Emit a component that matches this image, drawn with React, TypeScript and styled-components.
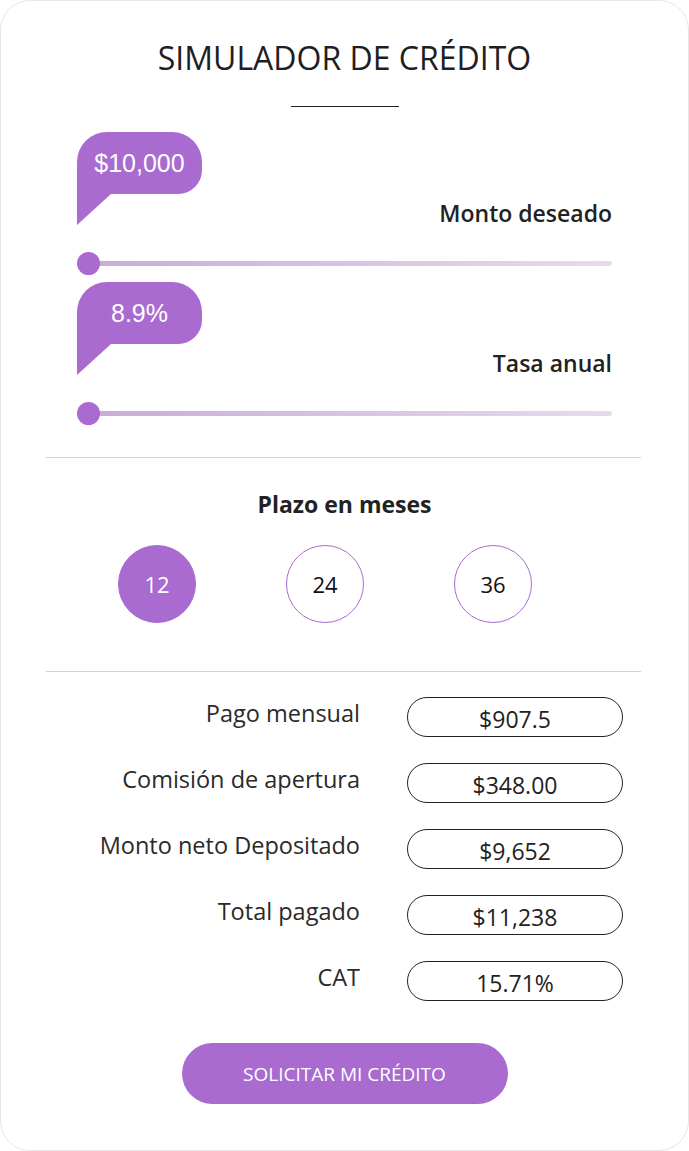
import React from "react";
import styled, { createGlobalStyle } from "styled-components";

const PURPLE = "#a96bd0";

const GlobalStyle = createGlobalStyle`
  html, body { margin: 0; padding: 0; background: #ffffff; }
  * { box-sizing: border-box; }
  body { font-family: "Open Sans", "Noto Sans", sans-serif; color: #222; }
`;

const Card = styled.div`
  width: 689px;
  height: 1151px;
  border: 1px solid #e6e6e6;
  border-radius: 30px;
  background: #fff;
  padding-top: 37px;
  display: flex;
  flex-direction: column;
`;

const Title = styled.h1`
  margin: 0;
  font-family: "Open Sans", sans-serif;
  font-weight: 500;
  font-size: 32px;
  line-height: 40px;
  text-align: center;
  color: #1e1e24;
`;

const TitleRule = styled.div`
  width: 108px;
  height: 1px;
  background: #222;
  margin: 28px auto 0;
`;

const Sliders = styled.div`
  margin: 25px 76px 0 76px;
  display: flex;
  flex-direction: column;
  gap: 7px;
`;

const SliderBlock = styled.div`
  display: flex;
  flex-direction: column;
`;

const BubbleRow = styled.div`
  height: 93px;
  display: flex;
  justify-content: space-between;
  align-items: flex-start;
`;

const Bubble = styled.div`
  position: relative;
  width: 125px;
  height: 62px;
  background: ${PURPLE};
  border-radius: 30px 30px 24px 0;
  color: #fff;
  font-family: "Liberation Sans", Arial, sans-serif;
  font-size: 25px;
  display: flex;
  align-items: center;
  justify-content: center;
  &::after {
    content: "";
    position: absolute;
    left: 0;
    top: 100%;
    width: 0;
    height: 0;
    border-top: 31px solid ${PURPLE};
    border-right: 34px solid transparent;
  }
`;

const SliderLabel = styled.div`
  align-self: flex-end;
  font-weight: 600;
  font-size: 23px;
  line-height: 24px;
  margin-bottom: 0;
  color: #222;
`;

const Track = styled.div`
  margin-top: 26px;
  height: 24px;
  display: flex;
  align-items: center;
`;

const Thumb = styled.div`
  position: relative;
  z-index: 1;
  width: 23px;
  height: 23px;
  border-radius: 50%;
  background: ${PURPLE};
  flex: none;
`;

const Rail = styled.div`
  flex: 1;
  height: 5px;
  margin-left: -12px;
  border-radius: 3px;
  background: linear-gradient(90deg, #c8acd8 0%, #e6dbee 100%);
`;

const Divider = styled.div<{ $top: number }>`
  height: 1px;
  background: #d2d2d2;
  margin: ${(p) => p.$top}px 47px 0 45px;
`;

const SectionTitle = styled.div`
  margin-top: 32px;
  text-align: center;
  font-weight: 700;
  font-size: 23px;
  line-height: 28px;
  color: #222;
`;

const TermRow = styled.div`
  margin-top: 27px;
  padding-left: 117px;
  display: flex;
  gap: 90px;
`;

const TermOption = styled.div<{ $active?: boolean }>`
  width: 78px;
  height: 78px;
  border-radius: 50%;
  border: 1px solid ${PURPLE};
  background: ${(p) => (p.$active ? PURPLE : "#fff")};
  color: ${(p) => (p.$active ? "#fff" : "#111")};
  display: flex;
  align-items: center;
  justify-content: center;
  font-size: 22px;
`;

const Results = styled.div`
  margin-top: 25px;
  display: grid;
  grid-template-columns: 1fr 216px;
  column-gap: 47px;
  row-gap: 26px;
  padding-right: 65px;
`;

const ResultLabel = styled.div`
  text-align: right;
  font-size: 23.5px;
  line-height: 32px;
  color: #2a2a2a;
`;

const ResultValue = styled.div`
  height: 40px;
  border: 1.5px solid #222;
  border-radius: 20px;
  display: flex;
  align-items: center;
  justify-content: center;
  padding-top: 3px;
  font-size: 23px;
  color: #222;
`;

const CTA = styled.button`
  align-self: center;
  margin-top: 42px;
  width: 326px;
  height: 61px;
  border: none;
  border-radius: 31px;
  background: ${PURPLE};
  color: #fff;
  font-family: "Open Sans", sans-serif;
  font-size: 19px;
  cursor: pointer;
`;

const sliders = [
  { value: "$10,000", label: "Monto deseado" },
  { value: "8.9%", label: "Tasa anual" },
];

const results = [
  { label: "Pago mensual", value: "$907.5" },
  { label: "Comisión de apertura", value: "$348.00" },
  { label: "Monto neto Depositado", value: "$9,652" },
  { label: "Total pagado", value: "$11,238" },
  { label: "CAT", value: "15.71%" },
];

export default function App() {
  return (
    <>
      <GlobalStyle />
      <Card>
        <Title>SIMULADOR DE CRÉDITO</Title>
        <TitleRule />
        <Sliders>
          {sliders.map((s) => (
            <SliderBlock key={s.label}>
              <BubbleRow>
                <Bubble>{s.value}</Bubble>
                <SliderLabel>{s.label}</SliderLabel>
              </BubbleRow>
              <Track>
                <Thumb />
                <Rail />
              </Track>
            </SliderBlock>
          ))}
        </Sliders>
        <Divider $top={32} />
        <SectionTitle>Plazo en meses</SectionTitle>
        <TermRow>
          <TermOption $active>12</TermOption>
          <TermOption>24</TermOption>
          <TermOption>36</TermOption>
        </TermRow>
        <Divider $top={48} />
        <Results>
          {results.map((r) => (
            <React.Fragment key={r.label}>
              <ResultLabel>{r.label}</ResultLabel>
              <ResultValue>{r.value}</ResultValue>
            </React.Fragment>
          ))}
        </Results>
        <CTA>SOLICITAR MI CRÉDITO</CTA>
      </Card>
    </>
  );
}
